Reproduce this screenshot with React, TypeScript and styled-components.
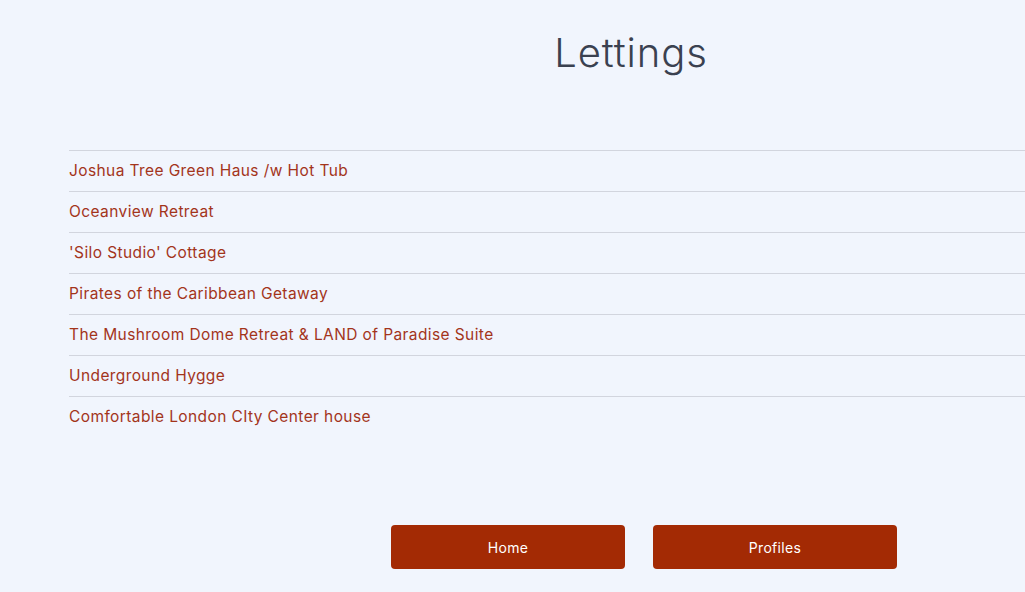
import React from "react";
import styled, { createGlobalStyle } from "styled-components";

const Global = createGlobalStyle`
  html, body { margin: 0; padding: 0; background: #f1f5fd; overflow: hidden; }
  body { font-family: Inter, "Liberation Sans", sans-serif; }
`;

const Page = styled.div`
  width: 1025px;
  height: 592px;
  background: #f1f5fd;
  display: flex;
  flex-direction: column;
  padding-left: 69px;
  box-sizing: border-box;
`;

const Title = styled.h1`
  margin: 0;
  padding: 26px 0 0 168px;
  height: 150px;
  box-sizing: border-box;
  text-align: center;
  font-family: Inter, sans-serif;
  font-weight: 300;
  font-size: 40px;
  letter-spacing: 0.9px;
  line-height: 54px;
  color: #3a4150;
`;

const List = styled.ul`
  list-style: none;
  margin: 0;
  padding: 0;
`;

const Row = styled.li`
  border-top: 1px solid #d2d5de;
  height: 41px;
  box-sizing: border-box;
  display: flex;
  align-items: center;
  padding-bottom: 1px;
  font-size: 15.5px;
  letter-spacing: 0.4px;
  color: #a3341b;
`;

const Buttons = styled.div`
  display: flex;
  gap: 28px;
  padding-left: 322px;
  margin-top: 88px;
`;

const Button = styled.button<{ $w: number }>`
  width: ${(p) => p.$w}px;
  height: 44px;
  border: none;
  border-radius: 4px;
  background: #a32a04;
  color: #fff;
  font-family: Inter, sans-serif;
  font-size: 14px;
  letter-spacing: 0.3px;
  cursor: pointer;
`;

const items = [
  "Joshua Tree Green Haus /w Hot Tub",
  "Oceanview Retreat",
  "'Silo Studio' Cottage",
  "Pirates of the Caribbean Getaway",
  "The Mushroom Dome Retreat & LAND of Paradise Suite",
  "Underground Hygge",
  "Comfortable London CIty Center house",
];

export default function App() {
  return (
    <Page>
      <Global />
      <Title>Lettings</Title>
      <List>
        {items.map((t) => (
          <Row key={t}>{t}</Row>
        ))}
      </List>
      <Buttons>
        <Button $w={234}>Home</Button>
        <Button $w={244}>Profiles</Button>
      </Buttons>
    </Page>
  );
}
